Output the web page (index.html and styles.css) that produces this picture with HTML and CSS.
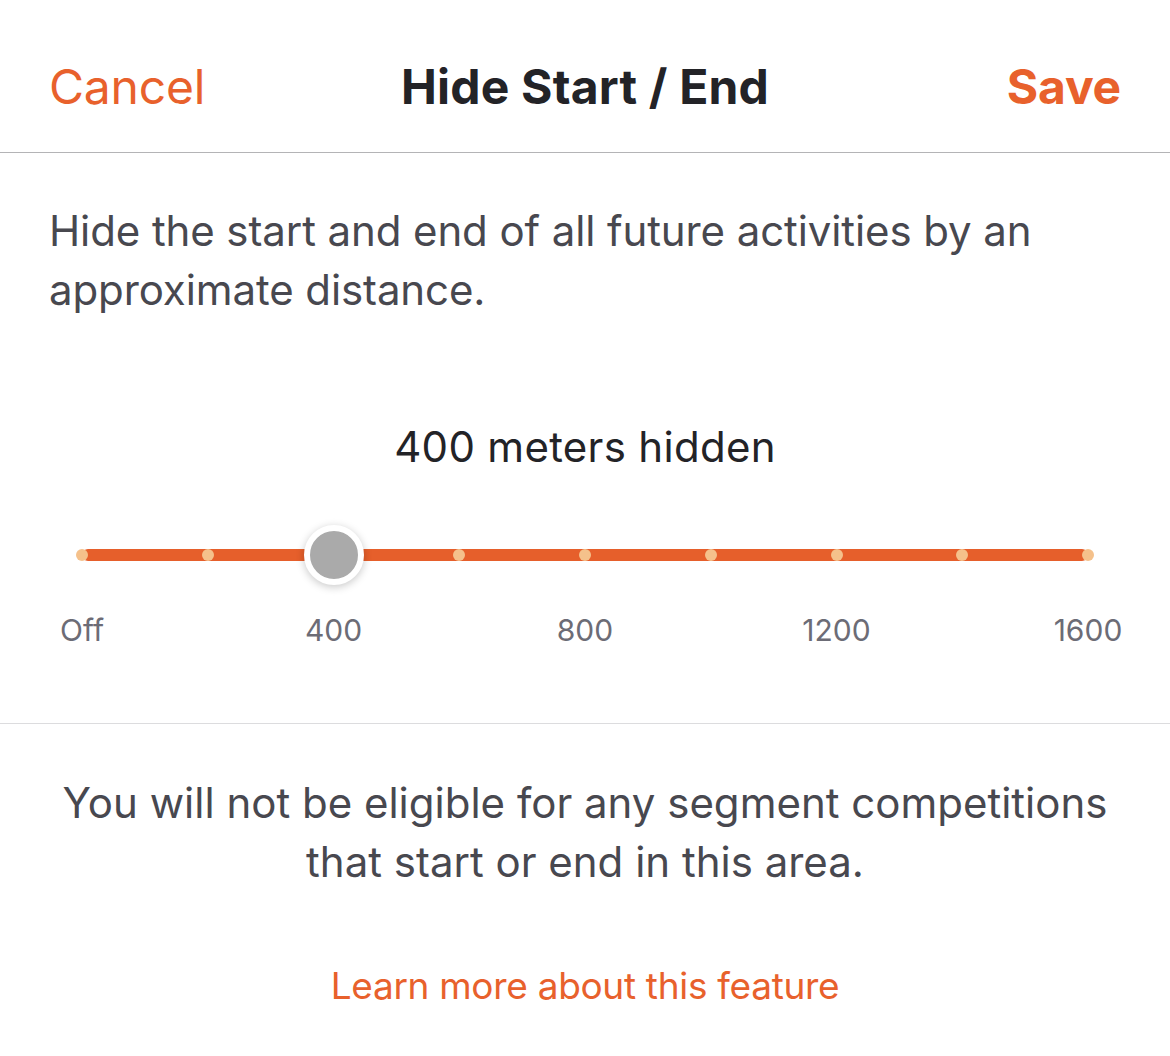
FILE: index.html
```html
<!DOCTYPE html>
<html>
<head>
<meta charset="utf-8">
<link rel="stylesheet" href="styles.css">
</head>
<body>
<div class="screen">
  <header class="nav">
    <span class="nav-btn cancel">Cancel</span>
    <span class="nav-title">Hide Start / End</span>
    <span class="nav-btn save">Save</span>
  </header>
  <section class="setting">
    <p class="desc">Hide the start and end of all future activities by an approximate distance.</p>
    <div class="value">400 meters hidden</div>
    <div class="slider">
      <div class="track">
        <span class="dot" style="left:0%"></span>
        <span class="dot" style="left:12.5%"></span>
        <span class="dot" style="left:37.5%"></span>
        <span class="dot" style="left:50%"></span>
        <span class="dot" style="left:62.5%"></span>
        <span class="dot" style="left:75%"></span>
        <span class="dot" style="left:87.5%"></span>
        <span class="dot" style="left:100%"></span>
        <span class="thumb" style="left:25%"></span>
      </div>
      <div class="labels">
        <span class="lbl" style="left:0%">Off</span>
        <span class="lbl" style="left:25%">400</span>
        <span class="lbl" style="left:50%">800</span>
        <span class="lbl" style="left:75%">1200</span>
        <span class="lbl" style="left:100%">1600</span>
      </div>
    </div>
  </section>
  <section class="note">
    <p class="warn">You will not be eligible for any segment competitions that start or end in this area.</p>
    <a class="learn">Learn more about this feature</a>
  </section>
</div>
</body>
</html>
```

FILE: styles.css
```css
html, body {
  margin: 0;
  padding: 0;
  background: #ffffff;
}
.screen {
  width: 1170px;
  height: 1056px;
  font-family: Inter, "Noto Sans", sans-serif;
  color: #48484f;
  overflow: hidden;
}
.nav {
  height: 152px;
  border-bottom: 1px solid #b4b4b6;
  display: grid;
  grid-template-columns: 1fr auto 1fr;
  align-items: center;
  padding: 0 49px;
}
.nav-btn, .nav-title {
  font-size: 48px;
  line-height: 1;
  padding-top: 22px;
}
.cancel { color: #e8612c; font-weight: 400; justify-self: start; letter-spacing: -0.2px; }
.save { color: #e8612c; font-weight: 700; justify-self: end; letter-spacing: -0.2px; }
.nav-title { color: #232327; font-weight: 700; letter-spacing: 0.2px; }
.setting {
  border-bottom: 1px solid #dcdcde;
  padding: 48px 49px 0;
  height: 571px;
  box-sizing: border-box;
}
.desc {
  margin: 0;
  font-size: 42px;
  line-height: 59px;
  letter-spacing: -0.1px;
  color: #48484f;
}
.value {
  margin-top: 98px;
  text-align: center;
  font-size: 42px;
  line-height: 59px;
  color: #232327;
  letter-spacing: 0.3px;
}
.slider {
  margin: 73px 33px 0;
}
.track {
  position: relative;
  height: 12px;
  background: #e65f2b;
  border-radius: 6px;
}
.dot {
  position: absolute;
  top: 50%;
  width: 12px;
  height: 12px;
  margin: -6px 0 0 -6px;
  border-radius: 50%;
  background: #f5c18b;
}
.thumb {
  position: absolute;
  top: 50%;
  width: 48px;
  height: 48px;
  margin: -30px 0 0 -30px;
  border: 6px solid #ffffff;
  border-radius: 50%;
  background: #aaaaaa;
  box-shadow: 0 2px 8px rgba(0,0,0,0.22);
}
.labels {
  position: relative;
  height: 40px;
  margin-top: 49px;
}
.lbl {
  position: absolute;
  top: 0;
  transform: translateX(-50%);
  font-size: 30px;
  line-height: 40px;
  color: #6c6c76;
}
.note {
  padding: 49px 40px 0;
  text-align: center;
}
.warn {
  margin: 0 auto;
  font-size: 42px;
  line-height: 59px;
  color: #48484f;
  width: 1080px;
}
.learn {
  display: block;
  margin-top: 70px;
  font-size: 37px;
  line-height: 50px;
  color: #e8612c;
  letter-spacing: -0.3px;
}
```
